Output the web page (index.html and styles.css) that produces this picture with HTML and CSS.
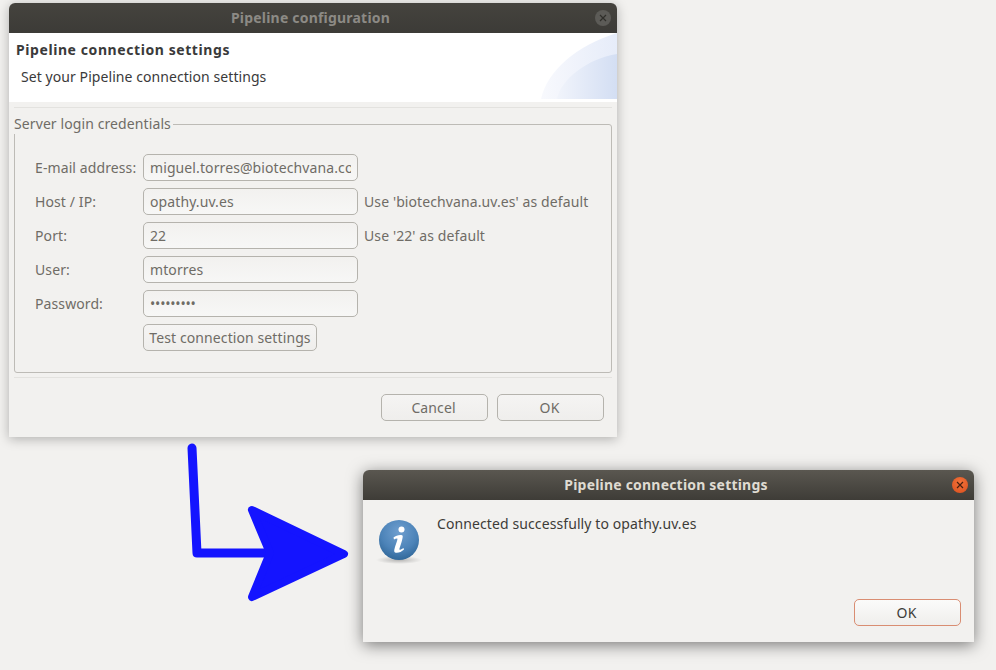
FILE: index.html
```html
<!DOCTYPE html>
<html lang="en">
<head>
<meta charset="utf-8">
<title>Pipeline configuration</title>
<link rel="stylesheet" href="styles.css">
</head>
<body>
<section class="window window-config">
  <header class="titlebar titlebar-dim">
    <span class="title">Pipeline configuration</span>
    <span class="close close-dim"><svg viewBox="0 0 16 16" width="16" height="16"><path d="M5 5l6 6M11 5l-6 6" fill="none" stroke="#2f2e2a" stroke-width="1.2"/></svg></span>
  </header>
  <div class="banner">
    <h1 class="banner-title">Pipeline connection settings</h1>
    <p class="banner-text">Set your Pipeline connection settings</p>
    <svg class="banner-art" viewBox="0 0 76 66" width="76" height="66">
      <defs>
        <linearGradient id="artA" x1="0" x2="1" y1="0" y2="0"><stop offset="0" stop-color="#f8f9fd"/><stop offset="1" stop-color="#e6ecf9"/></linearGradient>
        <linearGradient id="artB" x1="0" x2="1" y1="0" y2="0"><stop offset="0" stop-color="#f1f4fb"/><stop offset="1" stop-color="#d3def3"/></linearGradient>
      </defs>
      <path d="M0 66C6 38 36 12 76 0V66Z" fill="url(#artA)"/>
      <path d="M16 66C20 46 46 26 76 21V66Z" fill="url(#artB)"/>
    </svg>
  </div>
  <div class="rule rule-top"></div>
  <div class="group">
    <span class="legend">Server login credentials</span>
    <div class="form">
      <span class="label">E-mail address:</span>
      <span class="field"><span class="field-text">miguel.torres@biotechvana.com</span></span>
      <span class="hint"></span>
      <span class="label">Host / IP:</span>
      <span class="field"><span class="field-text">opathy.uv.es</span></span>
      <span class="hint">Use 'biotechvana.uv.es' as default</span>
      <span class="label">Port:</span>
      <span class="field"><span class="field-text">22</span></span>
      <span class="hint">Use '22' as default</span>
      <span class="label">User:</span>
      <span class="field"><span class="field-text">mtorres</span></span>
      <span class="hint"></span>
      <span class="label">Password:</span>
      <span class="field"><span class="field-text field-secret">•••••••••</span></span>
      <span class="hint"></span>
      <span class="label"></span>
      <span class="btn btn-test">Test connection settings</span>
    </div>
  </div>
  <div class="rule rule-bottom"></div>
  <div class="actions">
    <span class="btn btn-action">Cancel</span>
    <span class="btn btn-action">OK</span>
  </div>
</section>

<svg class="arrow" viewBox="0 0 175 165" width="175" height="165">
  <path d="M12 8L17 113H90" fill="none" stroke="#1414ff" stroke-width="9" stroke-linecap="round" stroke-linejoin="round"/>
  <path d="M72 70L164 114L72 157L90 113Z" fill="#1414ff" stroke="#1414ff" stroke-width="8" stroke-linejoin="round"/>
</svg>

<section class="window window-message">
  <header class="titlebar">
    <span class="title title-active">Pipeline connection settings</span>
    <span class="close close-active"><svg viewBox="0 0 16 16" width="16" height="16"><path d="M5 5l6 6M11 5l-6 6" fill="none" stroke="#4a2010" stroke-width="1.2"/></svg></span>
  </header>
  <div class="message-body">
    <svg class="info" viewBox="0 0 48 48" width="48" height="48">
      <defs>
        <radialGradient id="infoBall" cx="50%" cy="30%" r="75%"><stop offset="0" stop-color="#6f9fcf"/><stop offset="0.6" stop-color="#4c83b8"/><stop offset="1" stop-color="#2c6394"/></radialGradient>
        <radialGradient id="infoShadow"><stop offset="0" stop-color="#000" stop-opacity=".25"/><stop offset="1" stop-color="#000" stop-opacity="0"/></radialGradient>
      </defs>
      <ellipse cx="24" cy="44" rx="23" ry="4" fill="url(#infoShadow)"/>
      <circle cx="24" cy="24" r="20" fill="url(#infoBall)"/>
      <circle cx="26.500" cy="13.500" r="3" fill="#fff"/>
      <path d="M18.500 21.500C21 19.500 25 18.500 27.500 19.500C28.500 20.500 26 28 24.500 32.500C24 34.500 25.500 34 28.500 32L29 33.500C26.500 36 22.500 37.500 20 36.500C18.500 35.500 19.500 32.500 21 28C22 25 23 22.500 22 22.500C21 22.500 20 23 19 23.500Z" fill="#fff"/>
    </svg>
    <p class="message-text">Connected successfully to opathy.uv.es</p>
  </div>
  <div class="message-actions">
    <span class="btn btn-action btn-default">OK</span>
  </div>
</section>
</body>
</html>
```
FILE: styles.css
```css
html, body {
  margin: 0;
  height: 100%;
}
body {
  position: relative;
  width: 996px;
  height: 670px;
  overflow: hidden;
  background: #f2f1ef;
  font-family: "Noto Sans", "Open Sans", sans-serif;
  font-size: 14px;
  letter-spacing: .1px;
  color: #3d3c38;
}
.window {
  position: absolute;
  display: flex;
  flex-direction: column;
  background: #f2f1ef;
  border-radius: 6px 6px 0 0;
}
.window-config {
  left: 9px;
  top: 3px;
  width: 608px;
  height: 434px;
  box-shadow: 0 2px 12px rgba(0, 0, 0, .28);
}
.window-message {
  left: 363px;
  top: 470px;
  width: 611px;
  height: 172px;
  box-shadow: 0 3px 16px rgba(0, 0, 0, .5);
}
.titlebar {
  position: relative;
  flex: none;
  box-sizing: border-box;
  display: flex;
  align-items: center;
  justify-content: center;
  height: 30px;
  padding: 0 5px 2px 0;
  border-radius: 6px 6px 0 0;
  background: linear-gradient(#5a5750, #3e3c37);
}
.titlebar-dim {
  background: linear-gradient(#45433e, #3c3b37);
}
.title {
  font-weight: 700;
  font-size: 14px;
  color: #8c8a85;
  letter-spacing: .2px;
}
.title-active {
  color: #dfdbd2;
}
.close {
  position: absolute;
  right: 6px;
  top: 7px;
  display: flex;
  width: 16px;
  height: 16px;
  border-radius: 50%;
}
.close-dim {
  background: #5c5b57;
}
.close-active {
  right: 6px;
  background: radial-gradient(circle at 50% 35%, #f4733a, #d94f1e);
}
.banner {
  position: relative;
  flex: none;
  height: 69px;
  background: #fff;
  overflow: hidden;
}
.banner-title {
  margin: 0;
  padding: 7px 0 0 7px;
  font-size: 14px;
  line-height: 20px;
  font-weight: 700;
  letter-spacing: .58px;
  color: #3a3a3a;
}
.banner-text {
  margin: 0;
  padding: 7px 0 0 12px;
  line-height: 20px;
  letter-spacing: .07px;
  color: #3a3a3a;
}
.banner-art {
  position: absolute;
  right: 0;
  top: 0;
}
.rule {
  flex: none;
  height: 1px;
  background: #e3e2df;
  margin: 0 5px;
}
.rule-top {
  margin-top: 5px;
}
.rule-bottom {
  margin-top: 4px;
}
.group {
  position: relative;
  flex: none;
  box-sizing: border-box;
  height: 249px;
  margin: 16px 5px 0;
  border: 1px solid #bdbbb6;
  border-radius: 3px;
}
.legend {
  position: absolute;
  left: -1px;
  top: -11px;
  padding-right: 2px;
  background: #f2f1ef;
  line-height: 20px;
  color: #6f6c66;
}
.form {
  display: grid;
  grid-template-columns: 108px 215px 1fr;
  grid-auto-rows: 27px;
  row-gap: 7px;
  padding: 29px 0 0 20px;
  align-items: center;
}
.label {
  color: #6f6c66;
}
.field {
  display: block;
  box-sizing: border-box;
  height: 27px;
  padding: 0 6px;
  line-height: 25px;
  border: 1px solid #b5b3ad;
  border-radius: 5px;
  background: linear-gradient(#f2f1ef, #f7f7f6);
  color: #6f6c66;
}
.field-text {
  display: block;
  white-space: nowrap;
  overflow: hidden;
}
.field-secret {
  letter-spacing: -.2px;
}
.hint {
  padding-left: 6px;
  color: #6f6c66;
  white-space: nowrap;
}
.btn {
  box-sizing: border-box;
  display: flex;
  align-items: center;
  justify-content: center;
  height: 27px;
  border: 1px solid #b5b3ad;
  border-radius: 5px;
  background: linear-gradient(#f5f4f3, #efeeec);
  color: #6f6c66;
}
.btn-test {
  width: 174px;
}
.actions {
  display: flex;
  justify-content: flex-end;
  gap: 9px;
  padding: 16px 13px 0 0;
}
.btn-action {
  width: 107px;
  padding-right: 2px;
}
.message-body {
  position: relative;
  flex: 1;
  padding: 14px 0 0 74px;
}
.info {
  position: absolute;
  left: 12px;
  top: 16px;
}
.message-text {
  margin: 0;
  line-height: 20px;
  color: #3d3c38;
}
.message-actions {
  display: flex;
  justify-content: flex-end;
  padding: 0 13px 16px 0;
}
.btn-default {
  border-color: #d98d72;
  background: linear-gradient(#fbfbfa, #efeeec);
  color: #3d3c38;
}
.arrow {
  position: absolute;
  left: 180px;
  top: 440px;
}
```
